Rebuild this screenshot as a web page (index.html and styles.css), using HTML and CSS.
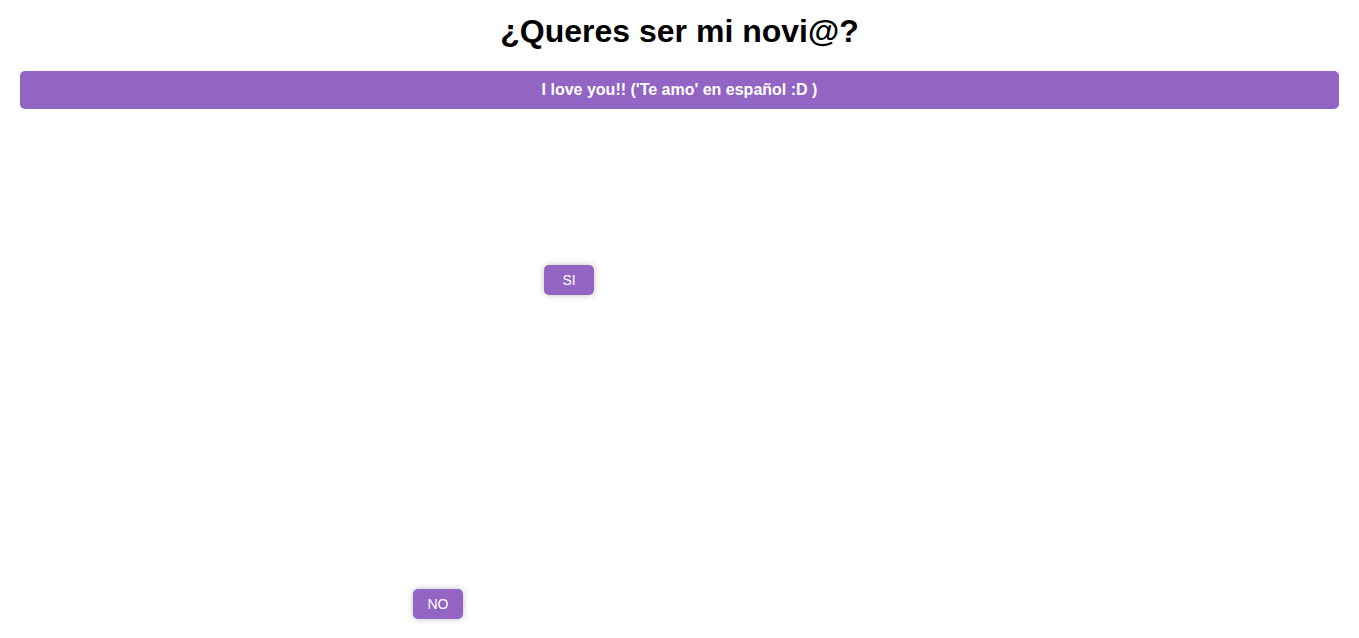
FILE: index.html
```html
<!DOCTYPE html>
<html lang="es">
<head>
<meta charset="utf-8">
<title>¿Queres ser mi novi@?</title>
<link rel="stylesheet" href="styles.css">
</head>
<body>
<main class="page">
  <h1 class="title">¿Queres ser mi novi@?</h1>
  <div class="banner">I love you!! ('Te amo' en español :D )</div>
  <div class="stage">
    <button class="btn btn-si">SI</button>
    <button class="btn btn-no">NO</button>
  </div>
</main>
</body>
</html>
```

FILE: styles.css
```css
html, body {
  margin: 0;
  padding: 0;
  background: #ffffff;
  font-family: "Liberation Sans", Arial, sans-serif;
}
.page {
  padding: 13px 20px 0;
}
.title {
  margin: 0 0 21px;
  font-size: 32px;
  line-height: 37px;
  font-weight: bold;
  text-align: center;
  color: #000;
}
.banner {
  background: #9264c4;
  color: #fff;
  font-weight: bold;
  font-size: 16px;
  line-height: 18px;
  padding: 10px;
  text-align: center;
  border-radius: 5px;
}
.stage {
  position: relative;
  height: 520px;
}
.btn {
  position: absolute;
  width: 50px;
  height: 30px;
  border: none;
  border-radius: 5px;
  background: #9264c4;
  color: #fff;
  font-family: "Liberation Sans", Arial, sans-serif;
  font-size: 14px;
  box-shadow: 0 0 6px rgba(0, 0, 0, 0.25);
  padding: 0;
}
.btn-si {
  left: 524px;
  top: 156px;
}
.btn-no {
  left: 393px;
  top: 480px;
}
```
